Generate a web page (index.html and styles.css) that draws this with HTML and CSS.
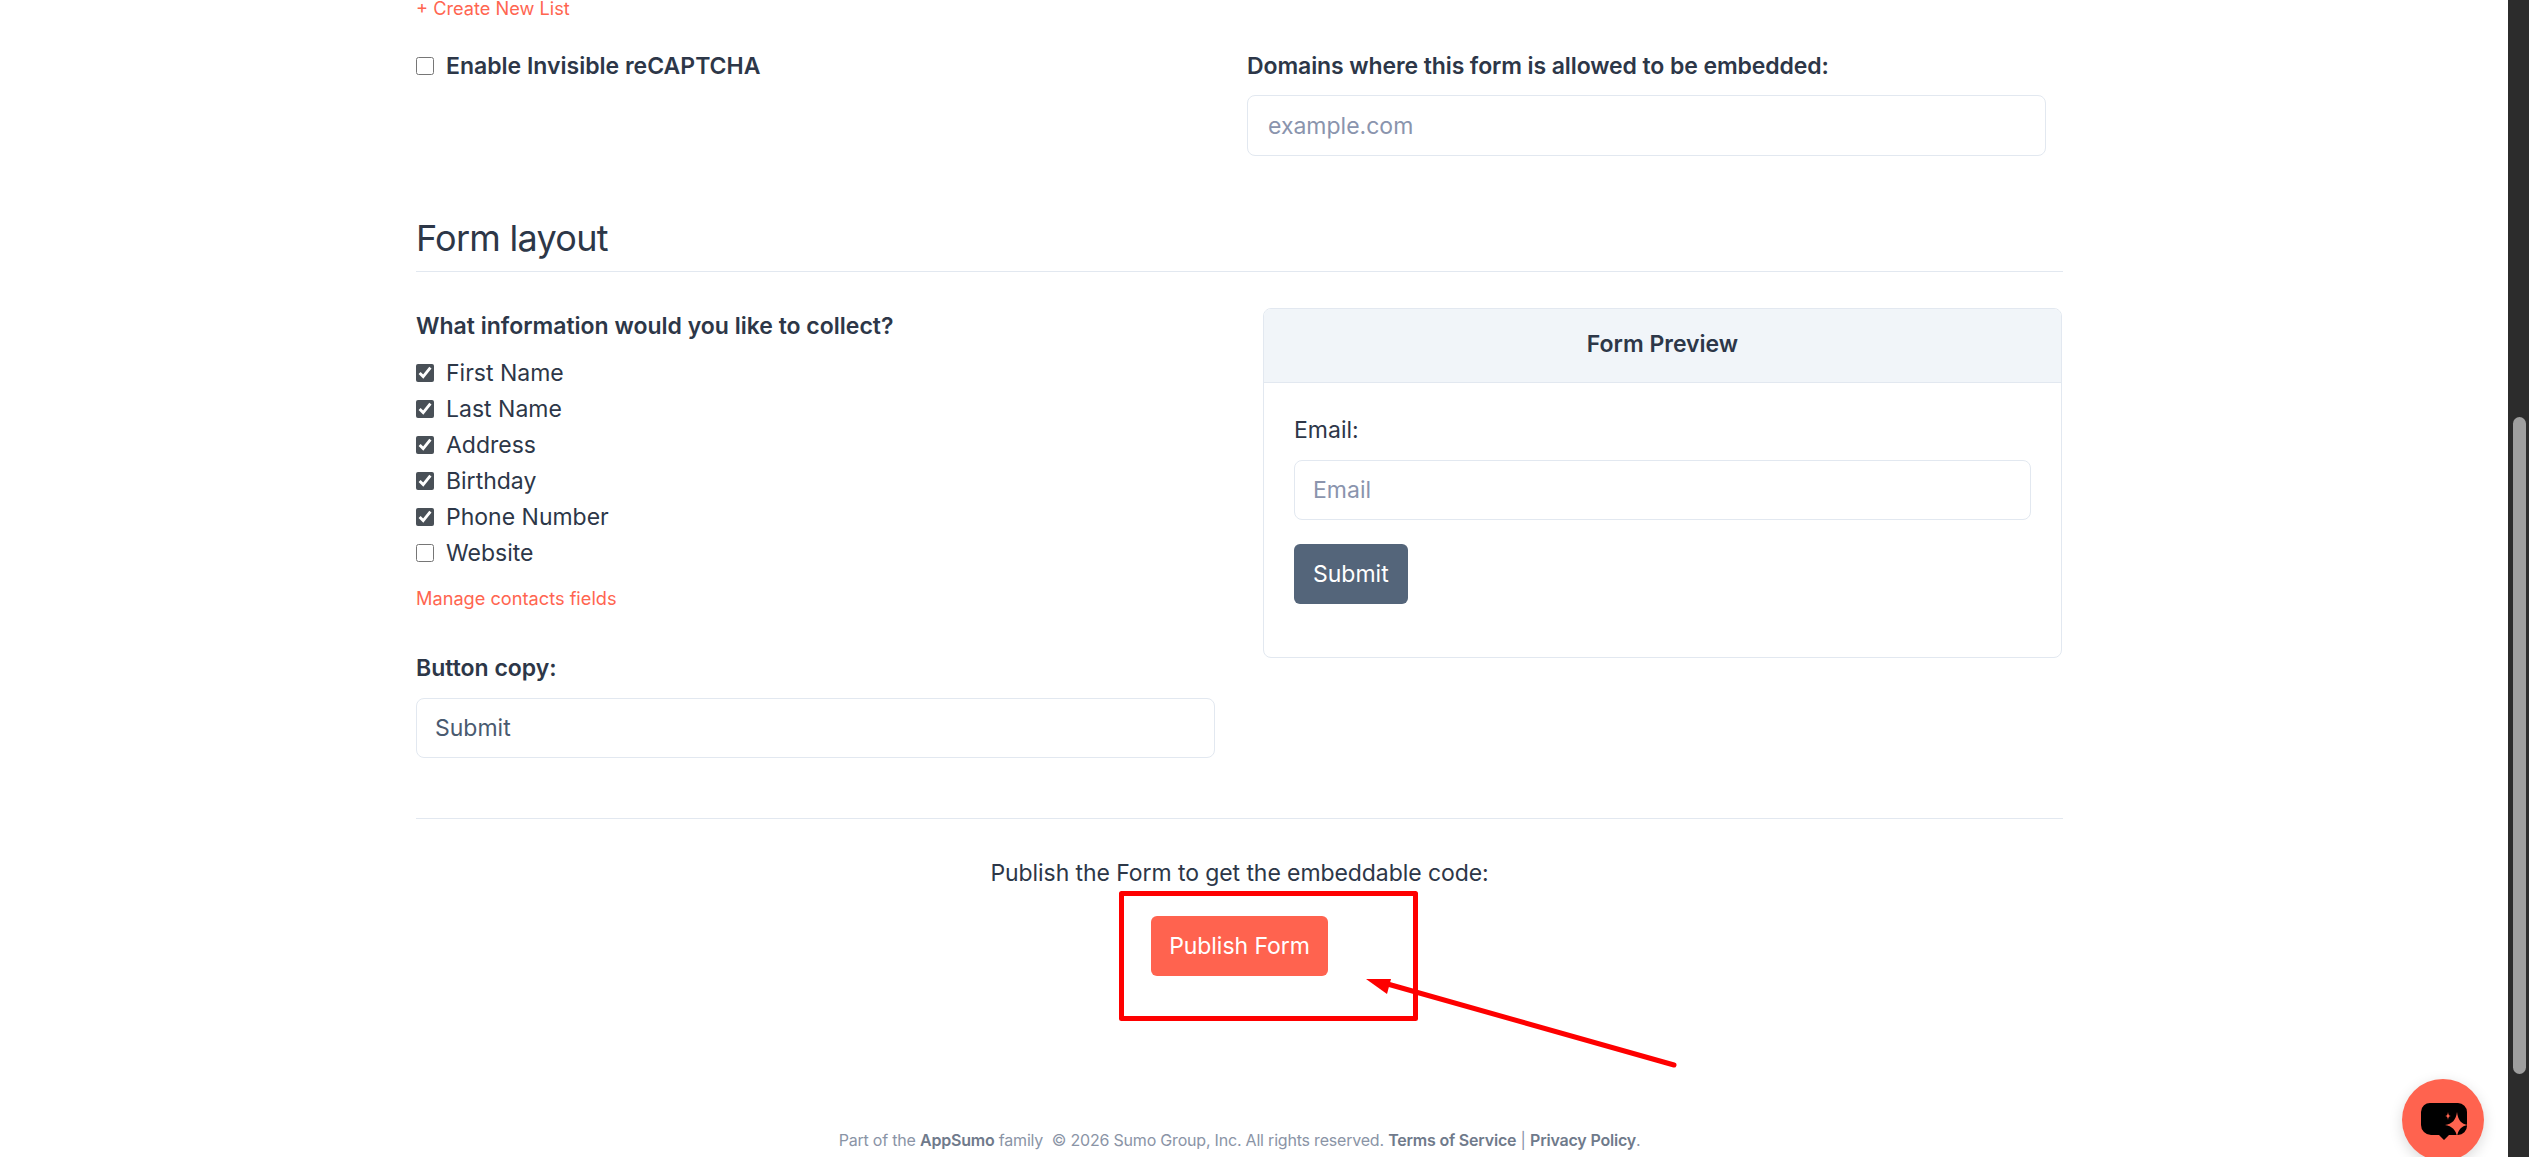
FILE: index.html
```html
<!DOCTYPE html>
<html lang="en">
<head>
  <meta charset="UTF-8" />
  <title>Form settings</title>
  <link rel="stylesheet" href="styles.css">
</head>
<body>
  <div class="page">
    <main class="content">
      <a class="link create-link" href="#">+ Create New List</a>

      <div class="top-row">
        <label class="check check-strong"><input type="checkbox"> Enable Invisible reCAPTCHA</label>
        <div>
          <label class="field-label">Domains where this form is allowed to be embedded:</label>
          <input class="text-input domain-input" type="text" placeholder="example.com">
        </div>
      </div>

      <h2 class="section-title">Form layout</h2>

      <div class="layout-row">
        <div class="layout-left">
          <label class="field-label">What information would you like to collect?</label>
          <div class="check-list">
            <label class="check"><input type="checkbox" checked> First Name</label>
            <label class="check"><input type="checkbox" checked> Last Name</label>
            <label class="check"><input type="checkbox" checked> Address</label>
            <label class="check"><input type="checkbox" checked> Birthday</label>
            <label class="check"><input type="checkbox" checked> Phone Number</label>
            <label class="check"><input type="checkbox"> Website</label>
          </div>
          <a class="link manage-link" href="#">Manage contacts fields</a>
          <label class="field-label copy-label">Button copy:</label>
          <input class="text-input copy-input" type="text" value="Submit">
        </div>

        <div class="preview">
          <div class="preview-head">Form Preview</div>
          <div class="preview-body">
            <label class="preview-label">Email:</label>
            <input class="text-input preview-input" type="text" placeholder="Email">
            <button class="btn btn-slate">Submit</button>
          </div>
        </div>
      </div>

      <div class="publish">
        <p class="publish-text">Publish the Form to get the embeddable code:</p>
        <button class="btn btn-coral">Publish Form</button>
      </div>

      <footer class="footer">Part of the <b>AppSumo</b> family &nbsp;© 2026 Sumo Group, Inc. All rights reserved. <b>Terms of Service</b> | <b>Privacy Policy</b>.</footer>
    </main>

    <div class="scrollbar"><div class="scrollbar-thumb"></div></div>
  </div>

  <!-- red markup drawn over the screenshot -->
  <svg class="markup" width="2529" height="1157" viewBox="0 0 2529 1157">
    <rect x="1121.5" y="893.5" width="294" height="125" fill="none" stroke="#fe0000" stroke-width="5" stroke-linejoin="round"/>
    <line x1="1674" y1="1065" x2="1384" y2="983" stroke="#fe0000" stroke-width="5" stroke-linecap="round"/>
    <polygon points="1366,979 1391,979 1387,994" fill="#fe0000"/>
  </svg>

  <button class="chat-btn" aria-label="Chat">
    <svg width="82" height="82" viewBox="0 0 82 82">
      <path d="M29 24H56a9 9 0 0 1 9 9V47a9 9 0 0 1-9 9H47L42 61 37 56H29a10 10 0 0 1-10-10V33a9 9 0 0 1 10-9Z" fill="#000"/>
      <path d="M55 33C56 41 59 45 66 46 59 47 56 51 55 58 54 51 50 47 43 46 50 45 54 41 55 33Z" fill="#ff634f"/>
      <path d="M46 33C46.300 35.800 47 36.700 49 37 47 37.300 46.300 38.200 46 41 45.700 38.200 45 37.300 43 37 45 36.700 45.700 35.800 46 33Z" fill="#ff634f"/>
    </svg>
  </button>
</body>
</html>
```

FILE: styles.css
```css
* {
  box-sizing: border-box;
}

html, body {
  margin: 0;
  height: 1157px;
  overflow: hidden;
}

body {
  font-family: "Inter", "Liberation Sans", sans-serif;
  font-size: 23px;
  color: #2d3748;
  background: #fff;
  position: relative;
}

.page {
  display: flex;
  height: 1157px;
}

.content {
  flex: 1;
  padding-left: 416px;
  padding-right: 445px;
}

.link {
  color: #ff6550;
  text-decoration: none;
  display: block;
  font-size: 18.2px;
}

.create-link {
  line-height: 16px;
}

.top-row {
  display: grid;
  grid-template-columns: 799px 799px;
  gap: 32px;
  margin-top: 40px;
}

.check {
  display: flex;
  align-items: center;
  gap: 12px;
  height: 36px;
}

.check input {
  width: 18px;
  height: 18px;
  margin: 0;
  accent-color: #495057;
}

.check-strong {
  font-weight: 600;
  height: 20px;
}

.field-label {
  display: block;
  font-weight: 600;
  line-height: 20px;
}

.top-row .field-label {
  letter-spacing: -0.1px;
}

.text-input {
  display: block;
  width: 100%;
  height: 60px;
  padding: 0 18px;
  border: 1px solid #e2e8f0;
  border-radius: 8px;
  font: inherit;
  color: #4a5a70;
  background: #fff;
}

.text-input::placeholder {
  color: #8a94ad;
  opacity: 1;
}

.domain-input {
  margin-top: 19px;
  height: 61px;
  padding: 0 20px;
}

.section-title {
  margin: 60px 0 0;
  padding-bottom: 11px;
  border-bottom: 1px solid #e2e8f0;
  font-size: 36px;
  font-weight: 400;
  letter-spacing: -0.02em;
  line-height: 44px;
}

.layout-row {
  display: grid;
  grid-template-columns: 799px 799px;
  gap: 48px;
  margin-top: 36px;
  padding-bottom: 60px;
  border-bottom: 1px solid #e2e8f0;
  align-items: start;
}

.layout-left {
  padding-top: 8px;
}

.check-list {
  margin-top: 19px;
}

.manage-link {
  margin-top: 17px;
  line-height: 20px;
}

.copy-label {
  margin-top: 50px;
}

.copy-input {
  margin-top: 20px;
}

.preview {
  border: 1px solid #e2e8f0;
  border-radius: 8px;
  height: 350px;
  overflow: hidden;
}

.preview-head {
  height: 74px;
  line-height: 71px;
  text-align: center;
  font-weight: 600;
  background: #f1f5f9;
  border-bottom: 1px solid #e2e8f0;
}

.preview-body {
  padding: 35px 30px;
}

.preview-label {
  display: block;
  line-height: 24px;
}

.preview-input {
  margin-top: 18px;
}

.btn {
  display: block;
  height: 60px;
  padding: 0 19px;
  border: none;
  border-radius: 6px;
  font: inherit;
  color: #fff;
}

.btn-slate {
  margin-top: 24px;
  background: #54657a;
}

.btn-coral {
  margin: 31px auto 0;
  padding: 0 18px;
  letter-spacing: -0.05px;
  background: #ff634f;
}

.publish {
  text-align: center;
}

.publish-text {
  margin: 42px 0 0;
  line-height: 24px;
  letter-spacing: -0.08px;
}

.footer {
  margin-top: 154px;
  text-align: center;
  font-size: 16px;
  letter-spacing: -0.2px;
  line-height: 20px;
  color: #8a94a6;
}

.footer b {
  font-weight: 600;
  color: #6f7a8b;
}

.scrollbar {
  width: 21px;
  background: #2c2c2c;
  padding: 417px 3px 0 5px;
}

.scrollbar-thumb {
  height: 657px;
  background: #9f9f9f;
  border-radius: 7px;
}

.markup {
  position: absolute;
  left: 0;
  top: 0;
  pointer-events: none;
}

.chat-btn {
  position: absolute;
  left: 2402px;
  top: 1079px;
  width: 82px;
  height: 82px;
  padding: 0;
  border: none;
  border-radius: 50%;
  background: #ff634f;
  box-shadow: 0 4px 14px rgba(0, 0, 0, 0.15);
}

.chat-btn svg {
  display: block;
}
```
